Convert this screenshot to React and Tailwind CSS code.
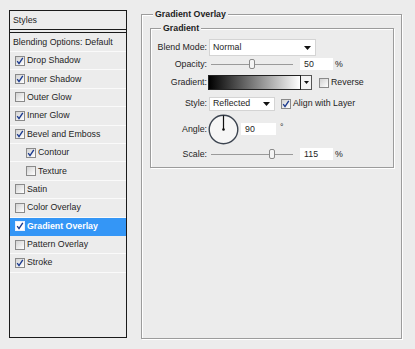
import React from "react";

function Check({ checked, selected }) {
  return (
    <span
      className={
        "w-[10px] h-[10px] border flex items-center justify-center shrink-0 " +
        (selected
          ? "border-[#e8f0ff] bg-white"
          : "border-[#8a8a8a] bg-[linear-gradient(135deg,#d2d2d2,#ffffff)]")
      }
    >
      {checked && (
        <svg width="8" height="8" viewBox="0 0 8 8">
          <path d="M1.2 4.2 L3 6.6 L6.8 0.8" stroke="#1b3a8f" strokeWidth="1.4" fill="none" />
        </svg>
      )}
    </span>
  );
}

function Arrow() {
  return (
    <svg width="7" height="4" viewBox="0 0 7 4">
      <path d="M0 0 H7 L3.5 4 Z" fill="#111" />
    </svg>
  );
}

function Slider({ thumb }) {
  return (
    <div className="relative w-[91px] h-[12px]">
      <div className="absolute left-[2px] top-[6px] w-[82px] border-t border-[#9a9a9a]"></div>
      <div
        className="absolute top-[1px] w-[6px] h-[10px] rounded-[2px] border border-[#8a8a8a] bg-[#f4f4f4]"
        style={{ left: thumb }}
      ></div>
    </div>
  );
}

const rows = [
  { label: "Drop Shadow", checked: true },
  { label: "Inner Shadow", checked: true },
  { label: "Outer Glow", checked: false },
  { label: "Inner Glow", checked: true },
  { label: "Bevel and Emboss", checked: true },
  { label: "Contour", checked: true, indent: true },
  { label: "Texture", checked: false, indent: true },
  { label: "Satin", checked: false },
  { label: "Color Overlay", checked: false },
  { label: "Gradient Overlay", checked: true, selected: true },
  { label: "Pattern Overlay", checked: false },
  { label: "Stroke", checked: true },
];

export default function App() {
  return (
    <div className="w-[415px] h-[349px] bg-[#ececec] flex items-start font-['Liberation_Sans',Arial,sans-serif] text-[8.8px] leading-[11px] text-[#1e1e1e]">
      {/* Left styles list */}
      <div className="ml-[9px] mt-[10px] w-[118px] h-[328px] border border-[#1a1a1a] flex flex-col">
        <div className="h-[19px] border-b border-[#1a1a1a] pl-[3px] flex items-center">Styles</div>
        <div className="h-[3px] border-b border-[#1a1a1a]"></div>
        <div className="h-[19px] border-b border-[#fafafa] pl-[3px] flex items-center">
          Blending Options: Default
        </div>
        {rows.map((r) => (
          <div
            key={r.label}
            className={
              "h-[18.4px] border-b flex items-center gap-[2px] " +
              (r.indent ? "pl-[16px] " : "pl-[5px] ") +
              (r.selected
                ? "bg-[#3496f6] border-[#3496f6] text-white font-bold"
                : "border-[#fafafa]")
            }
          >
            <Check checked={r.checked} selected={r.selected} />
            <span>{r.label}</span>
          </div>
        ))}
      </div>

      {/* Right panel */}
      <fieldset className="ml-[14px] mt-[9px] w-[261px] h-[330px] border border-[#9c9c9c] shadow-[1px_1px_0_#fff,inset_1px_1px_0_#fff] pl-[8px] pr-[7px] pt-[3px]">
        <legend className="ml-[3px] px-[2px] font-bold bg-[#ececec]">Gradient Overlay</legend>
        <fieldset className="h-[145px] border border-[#9c9c9c] shadow-[1px_1px_0_#fff,inset_1px_1px_0_#fff] px-0">
          <legend className="ml-[10px] px-[2px] font-bold bg-[#ececec]">Gradient</legend>
          <div className="flex flex-col">
            {/* Blend mode */}
            <div className="mt-[5px] h-[17px] flex items-center">
              <span className="w-[56px] text-right">Blend Mode:</span>
              <div className="ml-[2px] w-[107px] h-[17px] bg-white border border-[#d4d4d4] flex items-center justify-between pl-[3px] pr-[4px]">
                <span>Normal</span>
                <Arrow />
              </div>
            </div>
            {/* Opacity */}
            <div className="mt-[2px] h-[12px] flex items-center">
              <span className="w-[56px] text-right">Opacity:</span>
              <div className="ml-[2px]">
                <Slider thumb={40} />
              </div>
              <div className="w-[33px] h-[12px] bg-white flex items-center pl-[4px]">50</div>
              <span className="ml-[2px]">%</span>
            </div>
            {/* Gradient */}
            <div className="mt-[5px] h-[15px] flex items-center">
              <span className="w-[56px] text-right">Gradient:</span>
              <div className="ml-[1px] w-[93px] h-[15px] border border-[#222] bg-[linear-gradient(90deg,#000000,#ffffff)]"></div>
              <div className="w-[11px] h-[15px] border border-[#555] border-l-0 bg-[#f4f4f4] flex items-center justify-center">
                <svg width="5" height="3" viewBox="0 0 5 3">
                  <path d="M0 0 H5 L2.5 3 Z" fill="#111" />
                </svg>
              </div>
              <div className="ml-[7px]">
                <Check checked={false} />
              </div>
              <span className="ml-[2px]">Reverse</span>
            </div>
            {/* Style */}
            <div className="mt-[7px] h-[13px] flex items-center">
              <span className="w-[56px] text-right">Style:</span>
              <div className="ml-[2px] w-[66px] h-[14px] bg-white border border-[#d4d4d4] flex items-center justify-between pl-[3px] pr-[4px]">
                <span>Reflected</span>
                <Arrow />
              </div>
              <div className="ml-[6px]">
                <Check checked={true} />
              </div>
              <span className="ml-[2px]">Align with Layer</span>
            </div>
            {/* Angle */}
            <div className="mt-[4px] h-[30px] flex items-center">
              <span className="w-[56px] text-right">Angle:</span>
              <svg className="ml-[1px]" width="31" height="31" viewBox="0 0 31 31">
                <circle cx="15.5" cy="15.5" r="14.3" fill="#f6f6f6" stroke="#3c4450" strokeWidth="1.4" />
                <line x1="15.5" y1="15.5" x2="15.5" y2="1.5" stroke="#111" strokeWidth="1.2" />
                <circle cx="15.5" cy="15.5" r="1.3" fill="#111" />
              </svg>
              <div className="ml-[2px] w-[35px] h-[12px] bg-white flex items-center pl-[4px]">90</div>
              <span className="ml-[4px] self-start mt-[8px]">°</span>
            </div>
            {/* Scale */}
            <div className="mt-[4px] h-[12px] flex items-center">
              <span className="w-[56px] text-right">Scale:</span>
              <div className="ml-[2px]">
                <Slider thumb={60} />
              </div>
              <div className="w-[33px] h-[12px] bg-white flex items-center pl-[4px]">115</div>
              <span className="ml-[2px]">%</span>
            </div>
          </div>
        </fieldset>
      </fieldset>
    </div>
  );
}
